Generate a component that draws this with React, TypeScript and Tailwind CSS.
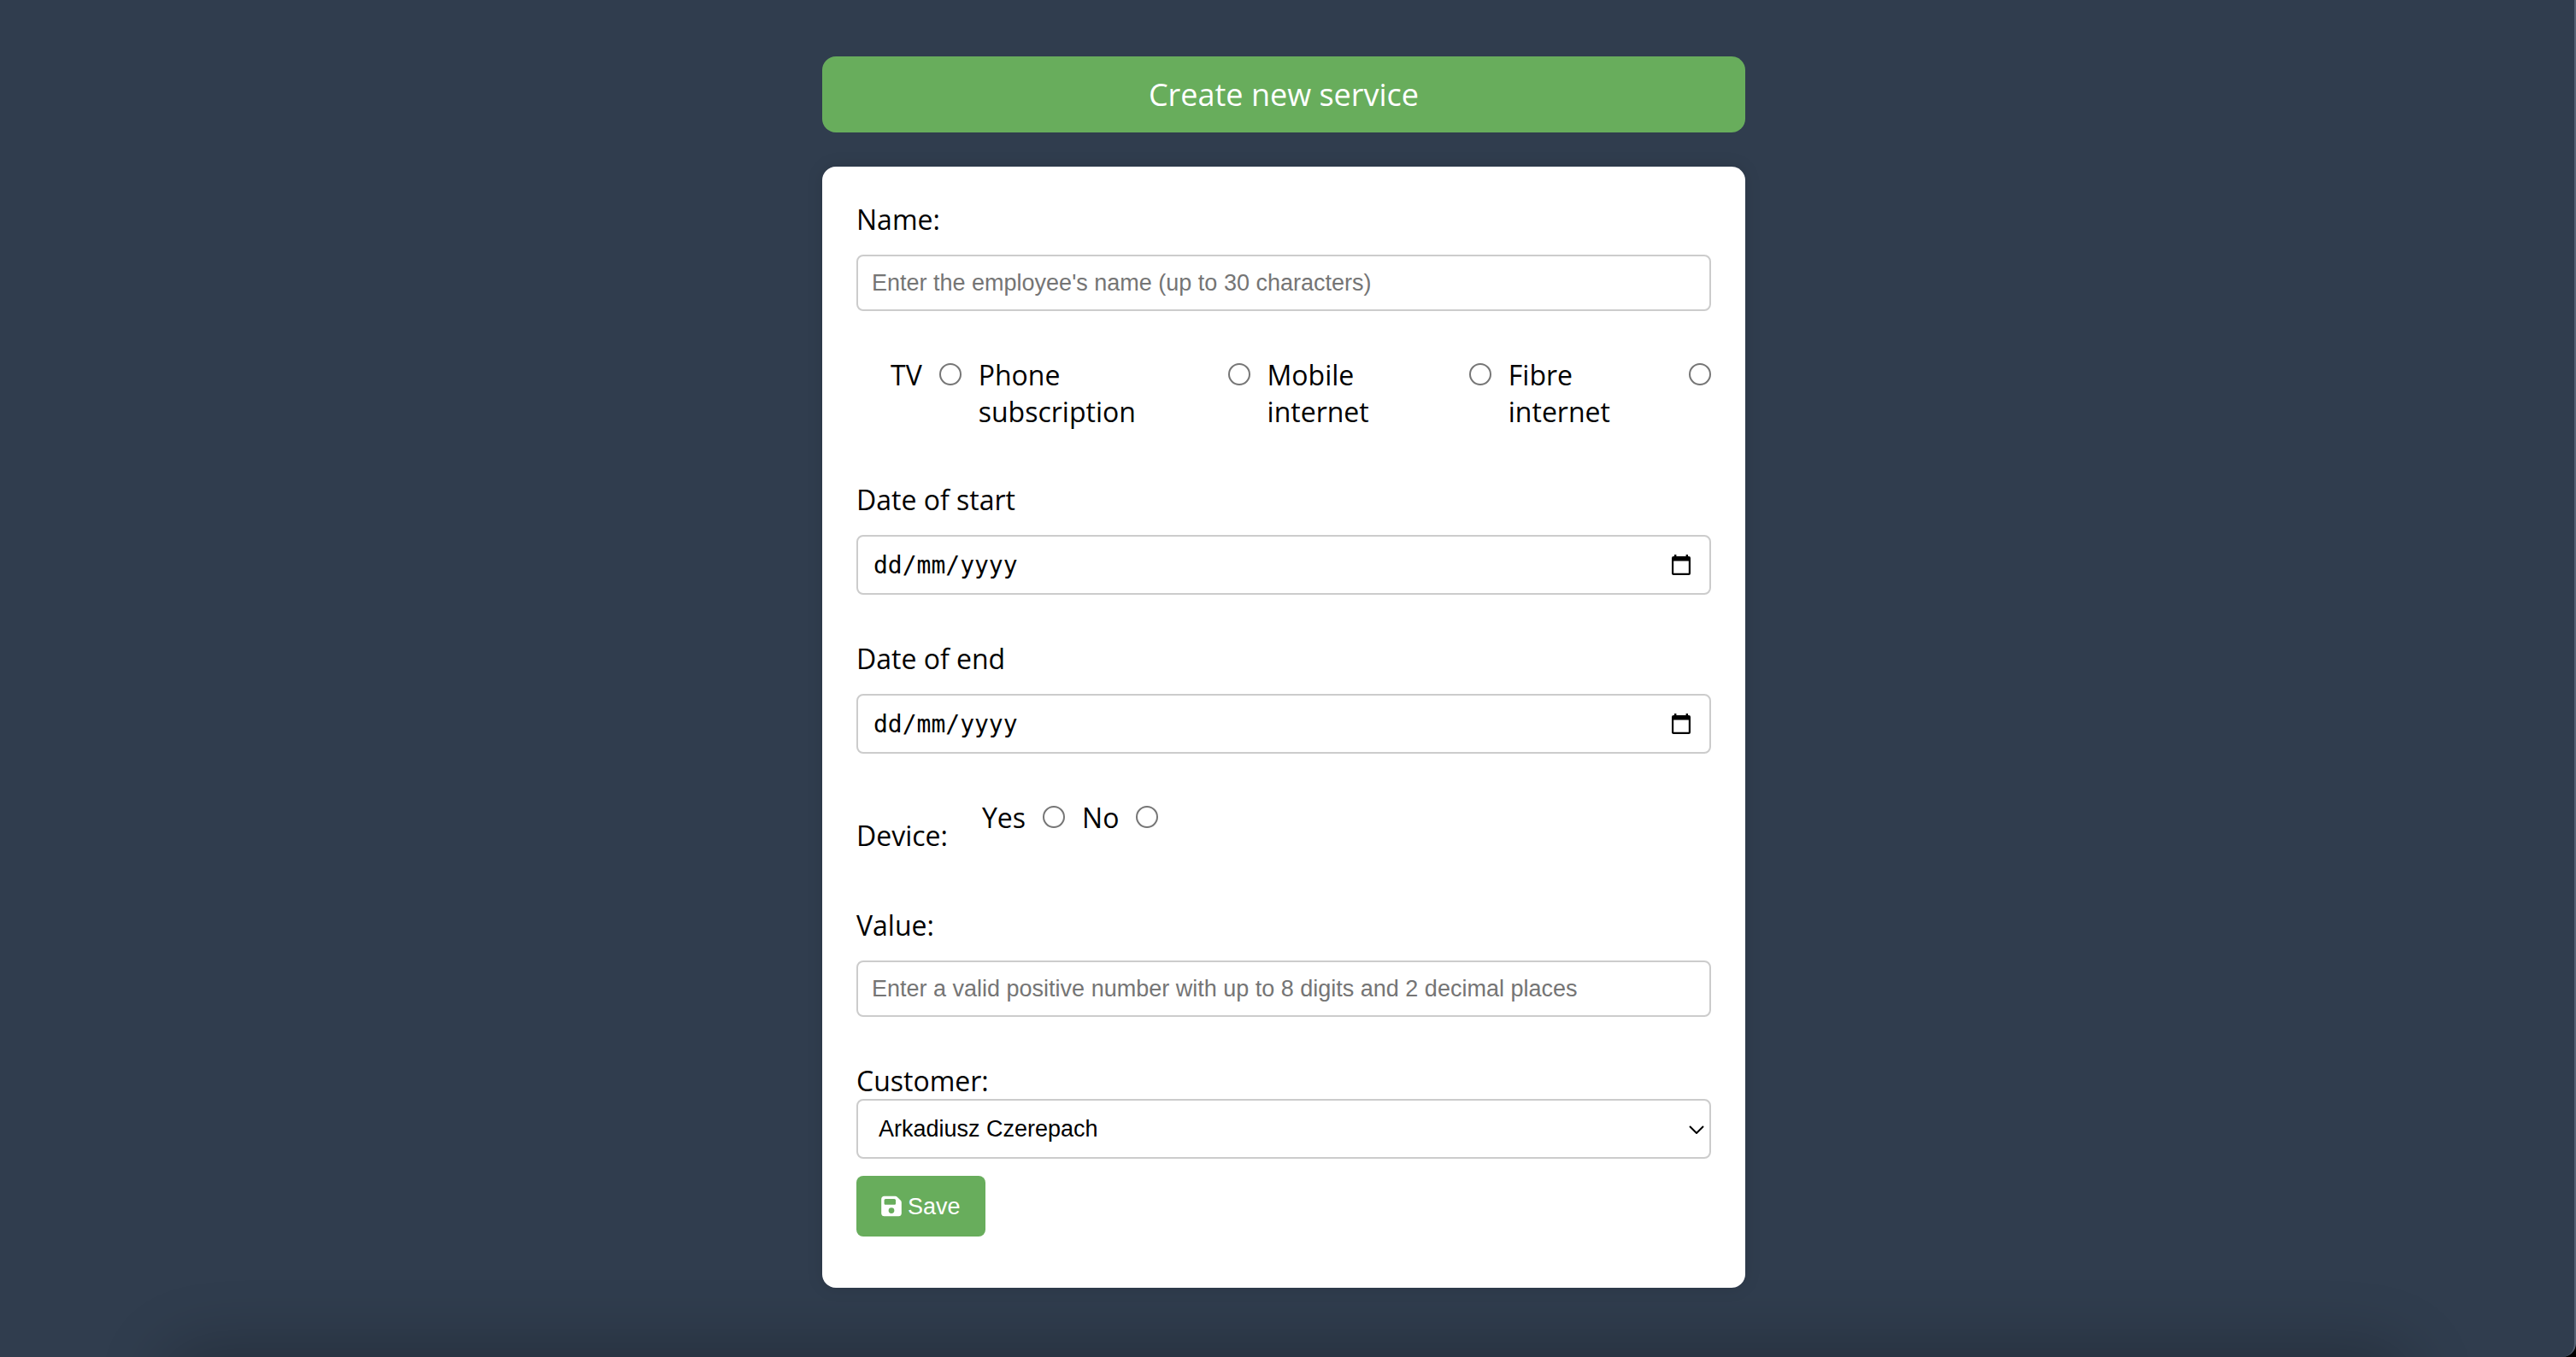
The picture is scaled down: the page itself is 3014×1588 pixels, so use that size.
import { useId } from "react";
import type { ReactNode } from "react";
import { FaFloppyDisk } from "react-icons/fa6";

const inputClass =
  "block w-full rounded-lg border-2 border-[#ccc] bg-white px-4 font-['Liberation_Sans',Arial,sans-serif] text-[27px] leading-[30px] text-black";

function Radio({ name, label }: { name: string; label: string }) {
  const id = useId();
  return (
    <>
      <label htmlFor={id}>{label}</label>
      <input
        id={id}
        type="radio"
        name={name}
        className="mt-2 size-[26px] shrink-0 appearance-none rounded-full border-2 border-[#767676] bg-white checked:border-8"
      />
    </>
  );
}

function Field({ label, children }: { label: string; children: (id: string) => ReactNode }) {
  const id = useId();
  return (
    <div className="mb-[53px] flex flex-col gap-5">
      <label htmlFor={id}>{label}</label>
      {children(id)}
    </div>
  );
}

function TextField({ label, placeholder }: { label: string; placeholder: string }) {
  return (
    <Field label={label}>
      {(id) => (
        <input
          id={id}
          type="text"
          placeholder={placeholder}
          className={`${inputClass} h-[66px] placeholder:text-[#757575] placeholder:opacity-100`}
        />
      )}
    </Field>
  );
}

function CalendarIcon() {
  return (
    <svg viewBox="0 0 22 24" className="h-6 w-[22px]" fill="none" aria-hidden="true">
      <path d="M3 0h2.4v2h11.2V0H19v2h1a2 2 0 0 1 2 2V22a2 2 0 0 1-2 2H2a2 2 0 0 1-2-2V4a2 2 0 0 1 2-2h1zM2.200 7.500V21.800h17.600V7.500z" fill="#000" fillRule="evenodd" />
    </svg>
  );
}

function DateField({ label }: { label: string }) {
  return (
    <Field label={label}>
      {(id) => (
        <div className="relative">
          <input
            id={id}
            type="text"
            inputMode="numeric"
            placeholder="dd/mm/yyyy"
            className="block h-[70px] w-full rounded-lg border-2 border-[#ccc] bg-white px-[18px] font-['DejaVu_Sans_Mono',monospace] text-[28px] text-black placeholder:text-black placeholder:opacity-100"
          />
          <button type="button" aria-label="Open calendar" className="absolute inset-y-0 right-6 flex items-center">
            <CalendarIcon />
          </button>
        </div>
      )}
    </Field>
  );
}

export default function App() {
  return (
    <div className="bg-black">
      <div className="relative min-h-screen overflow-hidden rounded-br-[16px] border-r-2 border-[#566274] bg-[#303d4e] pt-[66px] pr-2 pb-20 font-['Open_Sans','Noto_Sans',sans-serif] text-[32px] leading-[43px] text-black">
        <main className="mx-auto w-full max-w-[1080px]">
          <h1 className="rounded-2xl bg-[#68ad5c] py-5 text-center text-[36px] leading-[49px] text-white">
            Create new service
          </h1>

          <form className="mt-10 rounded-2xl bg-white p-10 pb-[60px] shadow-[0_0_20px_rgba(0,0,0,0.1)]">
            <TextField label="Name:" placeholder="Enter the employee's name (up to 30 characters)" />

            <div role="radiogroup" aria-label="Service type" className="mb-[60px] flex items-start gap-5 pl-10">
              <Radio name="type" label="TV" />
              <Radio name="type" label="Phone subscription" />
              <Radio name="type" label="Mobile internet" />
              <Radio name="type" label="Fibre internet" />
            </div>

            <DateField label="Date of start" />
            <DateField label="Date of end" />

            <div className="mb-[62px] flex items-end">
              <span id="device-label">Device:</span>
              <div role="radiogroup" aria-labelledby="device-label" className="flex items-start gap-5 pb-[21px] pl-10">
                <Radio name="device" label="Yes" />
                <Radio name="device" label="No" />
              </div>
            </div>

            <TextField label="Value:" placeholder="Enter a valid positive number with up to 8 digits and 2 decimal places" />

            <label htmlFor="customer" className="block">Customer:</label>
            <div className="relative">
              <select id="customer" className={`${inputClass} h-[70px] appearance-none pl-6`}>
                <option>Arkadiusz Czerepach</option>
              </select>
              <svg viewBox="0 0 18 10" className="pointer-events-none absolute right-2 top-[31px] h-[10px] w-[18px]" fill="none" aria-hidden="true">
                <path d="M1 1l8 8 8-8" stroke="#000" strokeWidth="2" />
              </svg>
            </div>

            <button
              type="submit"
              className="mt-5 flex h-[71px] items-center gap-[7px] rounded-lg bg-[#68ad5c] px-[29px] font-['Liberation_Sans',Arial,sans-serif] text-[27px] leading-[30px] text-white"
            >
              <FaFloppyDisk className="h-[27px] w-6" />
              Save
            </button>
          </form>
        </main>
        <div className="pointer-events-none absolute inset-x-[200px] top-full h-20 rounded-[40px] shadow-[0_0_80px_10px_rgba(0,0,0,0.24)]" />
      </div>
    </div>
  );
}
